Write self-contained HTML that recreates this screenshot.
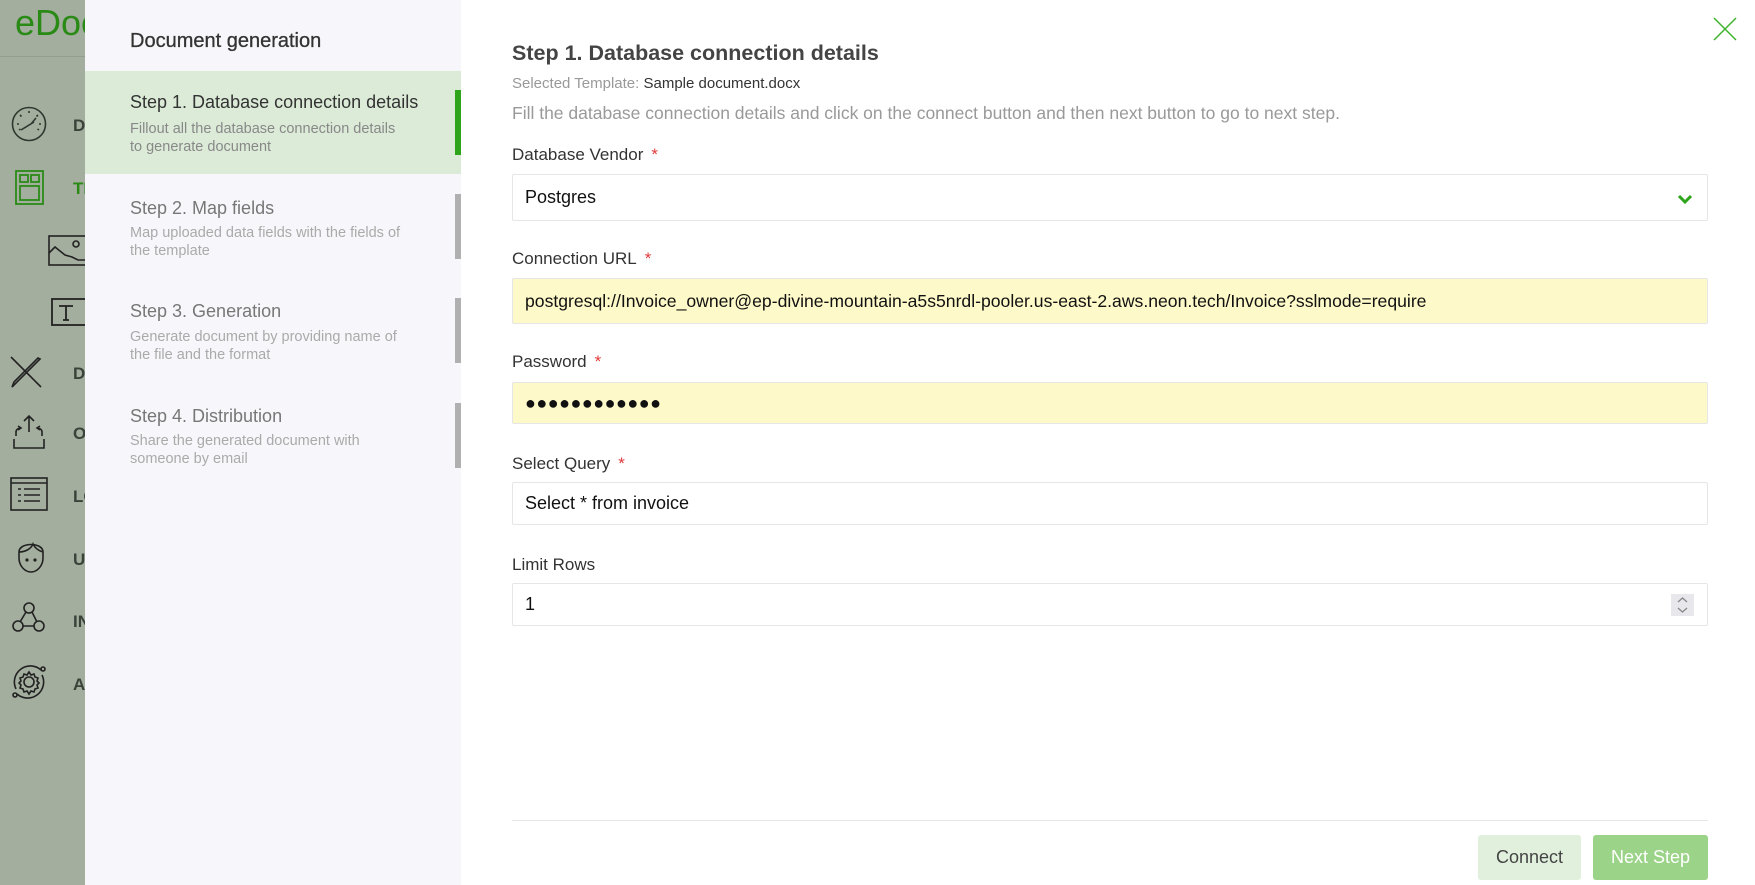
<!DOCTYPE html>
<html><head><meta charset="utf-8"><style>
*{box-sizing:border-box;margin:0;padding:0}
body{width:1755px;height:885px;overflow:hidden;font-family:"Liberation Sans",Arial,sans-serif;background:#fff;position:relative}
.side{position:absolute;left:0;top:0;width:85px;height:885px;background:#a3ae9e}
.logo{position:absolute;left:15px;top:2px;font-size:36px;color:#2a8a16}
.side .ln{position:absolute;left:0;top:56px;width:85px;height:1px;background:#949e90}
.ic{position:absolute}
.lab{position:absolute;left:73px;font-weight:bold;font-size:17px;color:#3a423a;width:12px;overflow:hidden}
.steps{position:absolute;left:85px;top:0;width:376px;height:885px;background:#f7f7fb}
.steps h2{position:absolute;left:45px;top:30px;font-size:20px;font-weight:normal;color:#333;-webkit-text-stroke:.3px #333}
.st{position:absolute;left:0;width:376px}
.st .t{position:absolute;left:45px;font-size:18px;color:#777}
.st .d{position:absolute;left:45px;font-size:14.5px;line-height:18px;color:#aaa;width:310px;white-space:nowrap}
.bar{position:absolute;right:0;width:6px;background:#b0b0b0}
.lbl{position:absolute;left:512px;font-size:17px;color:#333}
.lbl b{color:#e03a3a;font-weight:normal;margin-left:8px}
.inp{position:absolute;left:512px;width:1196px;border:1px solid #e6e6e6;border-radius:2px;font-size:18px;color:#111;padding-left:12px;display:flex;align-items:center}
</style></head><body>
<div class="side">
<div class="logo">eDoc</div><div class="ln"></div>
<svg class="ic" style="left:11px;top:106px" width="36" height="36" viewBox="0 0 36 36" fill="none" stroke="#2f372f" stroke-width="1.6"><circle cx="18" cy="18" r="16.5"/><path d="M10 24l13-8M20 18l5-6"/><path d="M6 18h2M18 5v2M9 9l1.5 1.5M27 9l-1.5 1.5M28 18h2M8 24l1.5-1M28 24l-1.5-1"/></svg>
<svg class="ic" style="left:15px;top:170px" width="29" height="35" viewBox="0 0 29 35" fill="none" stroke="#2a8a16" stroke-width="1.8"><rect x="1" y="1" width="27" height="33"/><rect x="5" y="5" width="8" height="7"/><rect x="16" y="5" width="8" height="7"/><rect x="5" y="16" width="19" height="14"/></svg>
<svg class="ic" style="left:48px;top:235px" width="37" height="31" viewBox="0 0 37 31" fill="none" stroke="#222" stroke-width="1.6"><rect x="1" y="1" width="40" height="29"/><path d="M1 18l6-6 5 4 5 4 7 2 6 3h11"/><circle cx="28" cy="9" r="3"/></svg>
<svg class="ic" style="left:50px;top:298px" width="35" height="28" viewBox="0 0 35 28" fill="none" stroke="#222" stroke-width="1.8"><rect x="2" y="1" width="40" height="26"/><path d="M9 8h14M16 8v14M13 22h6"/></svg>
<svg class="ic" style="left:10px;top:356px" width="32" height="32" viewBox="0 0 32 32" fill="none" stroke="#222" stroke-width="1.6"><path d="M1 1l30 30M30 3L4 29l-2 2 2-5L28 2z"/></svg>
<svg class="ic" style="left:11px;top:414px" width="36" height="36" viewBox="0 0 36 36" fill="none" stroke="#222" stroke-width="1.6"><path d="M18 2v16M13 7l5-5 5 5M3 25v9h30v-9M5 22v-4c0-3 3-4 5-4M7 16l3-2-3-2M31 22v-4c0-3-3-4-5-4M29 16l-3-2 3-2"/></svg>
<svg class="ic" style="left:10px;top:477px" width="38" height="34" viewBox="0 0 38 34" fill="none" stroke="#222" stroke-width="1.6"><rect x="1" y="1" width="36" height="32"/><path d="M1 6h36M8 12h3M14 12h16M8 18h3M14 18h16M8 24h3M14 24h16"/></svg>
<svg class="ic" style="left:16px;top:538px" width="30" height="36" viewBox="0 0 30 36" fill="none" stroke="#222" stroke-width="1.6"><path d="M3 14c0-10 24-10 24 0v6c0 8-6 14-12 14S3 28 3 20z"/><path d="M3 14c6 0 12-3 14-8 2 4 6 7 10 8"/><circle cx="11" cy="22" r=".8"/><circle cx="19" cy="22" r=".8"/></svg>
<svg class="ic" style="left:11px;top:600px" width="34" height="34" viewBox="0 0 34 34" fill="none" stroke="#222" stroke-width="1.6"><circle cx="18" cy="8" r="5"/><circle cx="7" cy="26" r="5"/><circle cx="28" cy="26" r="5"/><path d="M15 12l-6 10M21 12l5 10M12 26h11"/></svg>
<svg class="ic" style="left:10px;top:663px" width="38" height="38" viewBox="0 0 38 38" fill="none" stroke="#222" stroke-width="1.6"><path d="M6 26A16 16 0 0 1 31 7M32 12A16 16 0 0 1 7 31"/><circle cx="33" cy="6" r="2"/><circle cx="5" cy="32" r="2"/><circle cx="19" cy="19" r="5"/><path d="M19 9l2 3 3-1 1 3 3 1-1 3 2 2-2 2 1 3-3 1-1 3-3-1-2 3-2-3-3 1-1-3-3-1 1-3-2-2 2-2-1-3 3-1 1-3 3 1z"/></svg>
<div class="lab" style="top:116px">DA</div>
<div class="lab" style="top:179px;color:#2a8a16">TE</div>
<div class="lab" style="top:364px">DE</div>
<div class="lab" style="top:424px">OU</div>
<div class="lab" style="top:487px">LO</div>
<div class="lab" style="top:550px">US</div>
<div class="lab" style="top:612px">IN</div>
<div class="lab" style="top:675px">AU</div>
</div>
<div class="steps">
<h2>Document generation</h2>
<div class="st" style="top:71px;height:103px;background:#dcebd8"><div class="t" style="top:21px;color:#333">Step 1. Database connection details</div><div class="d" style="top:49px;color:#888">Fillout all the database connection details<br>to generate document</div><div class="bar" style="top:19px;height:65px;background:#2ea41a"></div></div>
<div class="st" style="top:174px;height:104px"><div class="t" style="top:24px">Step 2. Map fields</div><div class="d" style="top:50px">Map uploaded data fields with the fields of<br>the template</div><div class="bar" style="top:20px;height:65px"></div></div>
<div class="st" style="top:278px;height:104px"><div class="t" style="top:23px">Step 3. Generation</div><div class="d" style="top:50px">Generate document by providing name of<br>the file and the format</div><div class="bar" style="top:20px;height:65px"></div></div>
<div class="st" style="top:382px;height:104px"><div class="t" style="top:24px">Step 4. Distribution</div><div class="d" style="top:50px">Share the generated document with<br>someone by email</div><div class="bar" style="top:21px;height:65px"></div></div>
</div>
<div style="position:absolute;left:512px;top:41px;font-size:21.5px;font-weight:bold;color:#444">Step 1. Database connection details</div>
<div style="position:absolute;left:512px;top:75px;font-size:15px;color:#999">Selected Template: <span style="color:#333">Sample document.docx</span></div>
<div style="position:absolute;left:512px;top:103px;font-size:17.5px;color:#999">Fill the database connection details and click on the connect button and then next button to go to next step.</div>
<svg style="position:absolute;left:1713px;top:17px" width="24" height="24" viewBox="0 0 24 24" stroke="#3cb52a" stroke-width="1.5"><path d="M1 1l22 22M23 1L1 23"/></svg>
<div class="lbl" style="top:145px">Database Vendor<b>*</b></div>
<div class="inp" style="top:174px;height:47px">Postgres<svg style="position:absolute;right:14px;top:19px" width="16" height="10" viewBox="0 0 16 10" fill="none" stroke="#2ea41a" stroke-width="3"><path d="M2 2l6 6 6-6"/></svg></div>
<div class="lbl" style="top:249px">Connection URL<b>*</b></div>
<div class="inp" style="top:278px;height:46px;background:#fdf9c8;font-size:17.6px">postgresql://Invoice_owner@ep-divine-mountain-a5s5nrdl-pooler.us-east-2.aws.neon.tech/Invoice?sslmode=require</div>
<div class="lbl" style="top:352px">Password<b>*</b></div>
<div class="inp" style="top:382px;height:42px;background:#fdf9c8;font-size:18px;letter-spacing:0.5px">●●●●●●●●●●●●</div>
<div class="lbl" style="top:454px">Select Query<b>*</b></div>
<div class="inp" style="top:482px;height:43px">Select * from invoice</div>
<div class="lbl" style="top:555px">Limit Rows</div>
<div class="inp" style="top:583px;height:43px">1<div style="position:absolute;right:13px;top:10px;width:23px;height:22px;background:#e8e8ec"><svg width="23" height="22" viewBox="0 0 23 22" fill="none" stroke="#888" stroke-width="1.3"><path d="M7 8l4.5-4 4.5 4M7 14l4.5 4 4.5-4"/></svg></div></div>
<div style="position:absolute;left:512px;top:820px;width:1196px;height:1px;background:#e6e6e6"></div>
<div style="position:absolute;left:1478px;top:835px;width:103px;height:45px;background:#e1f0dd;border-radius:3px;color:#444;font-size:18px;display:flex;align-items:center;justify-content:center">Connect</div>
<div style="position:absolute;left:1593px;top:835px;width:115px;height:45px;background:#9bd488;border-radius:3px;color:#fff;font-size:18px;display:flex;align-items:center;justify-content:center">Next Step</div>
</body></html>
